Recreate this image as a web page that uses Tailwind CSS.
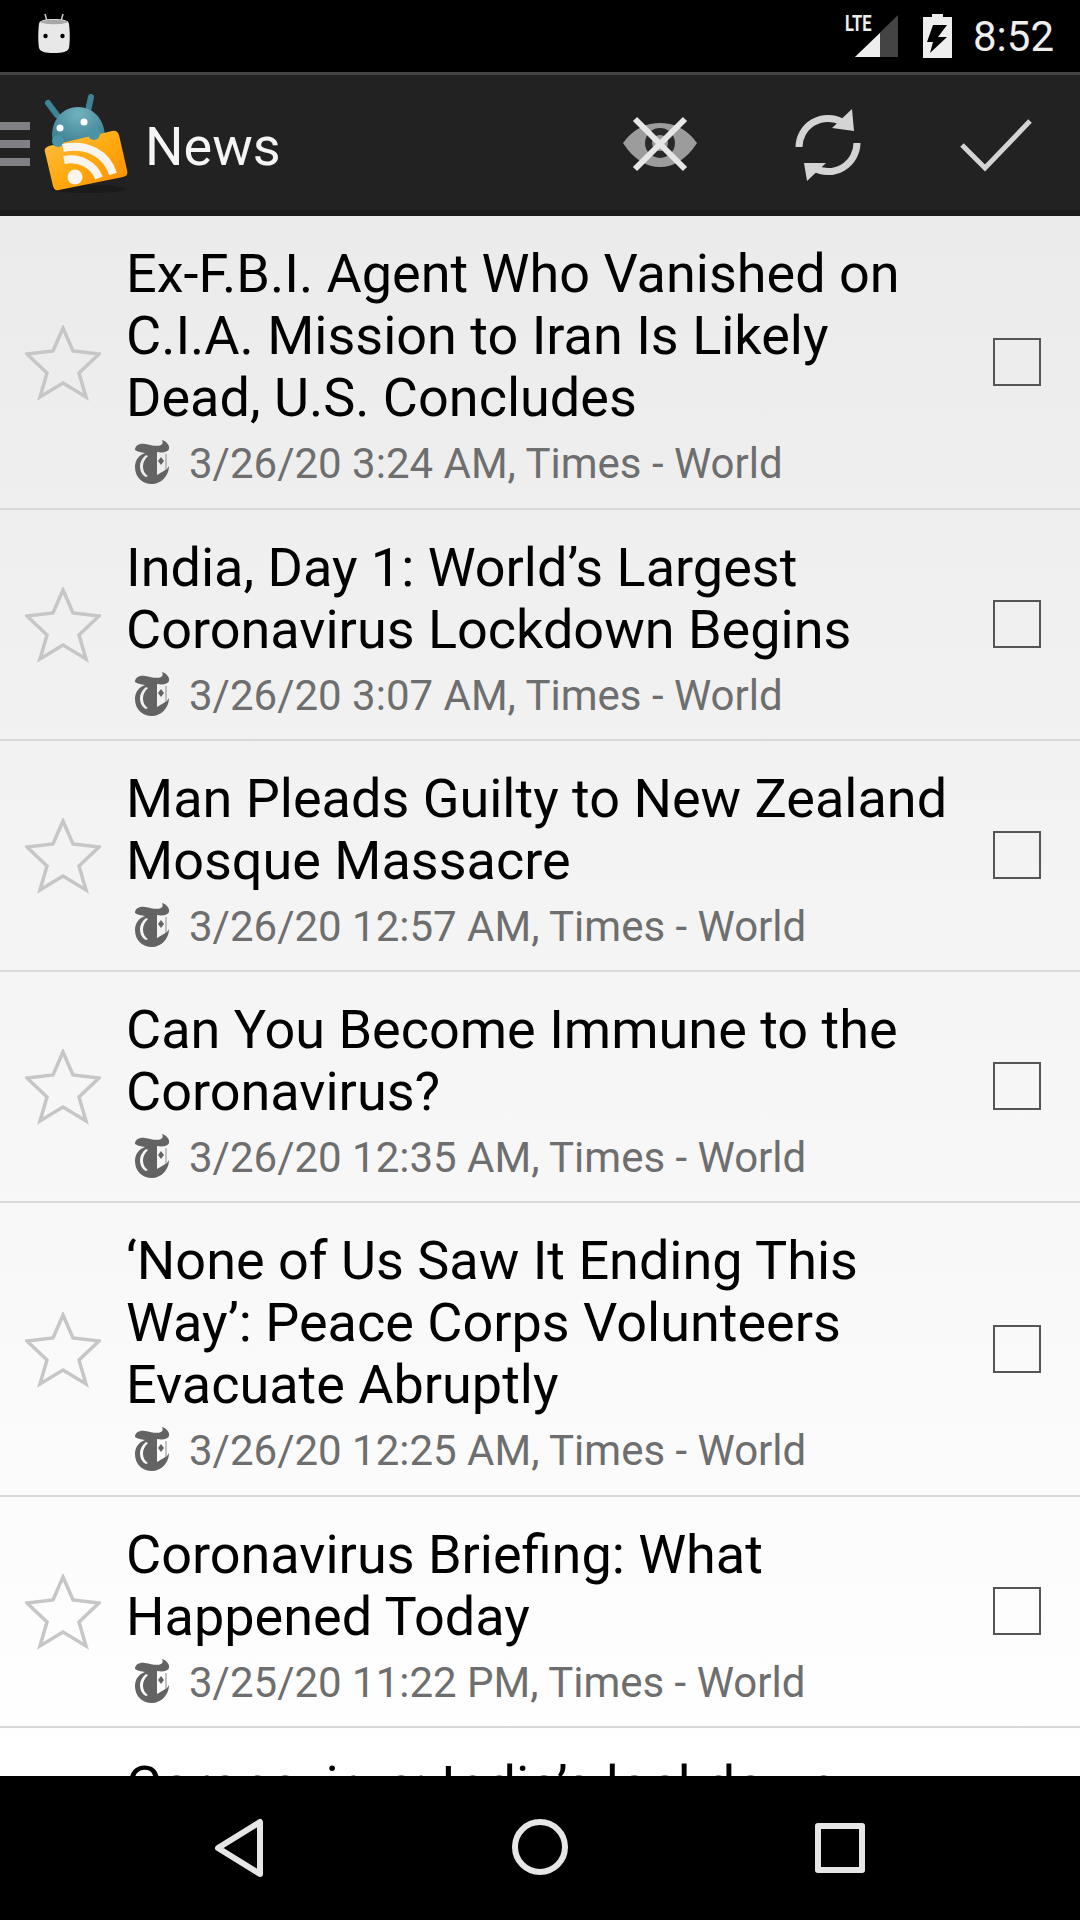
<!DOCTYPE html>
<html lang="en">
<head>
    <meta charset="UTF-8">
    <meta name="viewport" content="width=device-width, initial-scale=1.0">
    <title>News</title>
    <script src="https://cdn.jsdelivr.net/npm/@tailwindcss/browser@4"></script>
</head>
<body class="bg-black font-['Roboto',sans-serif]">
    <svg class="hidden">
        <defs>
            <symbol id="star" viewBox="0 0 76 76">
                <path d="M38 3 L48 26 L74 29 L54 48 L61 72 L38 58 L15 72 L22 48 L2 29 L28 26 Z" fill="none" stroke="#c6c6c6" stroke-width="3.5"/>
            </symbol>
            <symbol id="times" viewBox="0 0 36 44">
                <path fill-rule="evenodd" fill="#636363" d="M1 10 C1 5 6 3 11 4 C17 5 23 7 27 5 C29 4 29 2 28 0 C32 1 36 5 35 9 C34 12 29 13 23 12 L23 35 L33 29 L35 26 C35 36 27 44 18 44 C8 44 1 37 1 27 C1 20 5 15 11 13 C7 12 4 12 1 10 Z M12 15 C8 18 6 22 6 26 C6 31 8 35 12 37 L14 36 C11 34 9 31 9 26 C9 22 11 19 14 16 Z"/>
                <path d="M27 17 L30 21 L27 25 L24 21 Z" fill="#636363"/>
                <path d="M32 14 L32 30" stroke="#8a8a8a" stroke-width="1"/>
            </symbol>
        </defs>
    </svg>

    <div class="h-[1920px] flex flex-col overflow-hidden">
        <!-- Status bar -->
        <div class="h-[72px] bg-black relative shrink-0">
            <svg class="absolute left-[36px] top-[12px]" width="36" height="42" viewBox="0 0 36 42">
                <path d="M9 2 L11 9 M27 2 L25 9" stroke="#ccc" stroke-width="1.5"/>
                <path d="M3 12 C3 8 10 7 18 7 C26 7 33 8 33 12 C34 20 34 30 33 36 C32 40 26 41 18 41 C10 41 4 40 3 36 C2 30 2 20 3 12 Z" fill="#e8e8e8"/>
                <path d="M4 10 C8 7 28 7 32 10 C28 13 8 13 4 10 Z" fill="#a8a8a8"/>
                <circle cx="9.5" cy="24" r="2.2" fill="#000"/>
                <circle cx="26.5" cy="24" r="2.2" fill="#000"/>
            </svg>
            <div class="absolute left-[845px] top-[9px] text-[#eee] text-[22px] font-bold scale-x-75 origin-left leading-[30px]">LTE</div>
            <svg class="absolute left-[855px] top-[15px]" width="44" height="43" viewBox="0 0 44 43">
                <path d="M0 42 L43 0 L43 42 Z" fill="#444"/>
                <path d="M0 42 L25 18 L25 42 Z" fill="#eee"/>
            </svg>
            <svg class="absolute left-[923px] top-[14px]" width="29" height="44" viewBox="0 0 29 44">
                <path d="M9 0 H20 V3 H29 V44 H0 V3 H9 Z" fill="#eee"/>
                <path d="M10 11 L24 11 L15 23 L24 23 L7 39 L10 28 L4 28 Z" fill="#000"/>
            </svg>
            <div class="absolute left-[973px] top-[12px] text-[#eee] text-[42px] leading-[50px]">8:52</div>
        </div>

        <!-- Action bar -->
        <div class="h-[144px] shrink-0 bg-[#222222] border-t-[3px] border-t-[#444444] border-b-[6px] border-b-[#1a1a1a] relative flex items-center">
            <div class="w-[30px] flex flex-col gap-[10px] shrink-0 mt-[3px]">
                <div class="h-[8px] bg-[#808085]"></div>
                <div class="h-[8px] bg-[#808085]"></div>
                <div class="h-[8px] bg-[#808085]"></div>
            </div>
            <svg class="absolute left-[42px] top-[19px]" width="90" height="102" viewBox="0 0 90 102">
                <defs>
                    <radialGradient id="robot" cx="0.5" cy="0.15" r="0.9">
                        <stop offset="0" stop-color="#72b2bf"/>
                        <stop offset="1" stop-color="#2c6f84"/>
                    </radialGradient>
                    <linearGradient id="rss" x1="0" y1="0" x2="1" y2="1">
                        <stop offset="0" stop-color="#fdc04a"/>
                        <stop offset="0.5" stop-color="#ffa90f"/>
                        <stop offset="1" stop-color="#ff8c00"/>
                    </linearGradient>
                </defs>
                <ellipse cx="46" cy="95" rx="38" ry="4" fill="#1a1a1a"/>
                <path d="M6 9 L15 21 M49 3 L46 17" stroke="#3f8496" stroke-width="6" stroke-linecap="round"/>
                <path d="M10 42 C10 24 22 13 36 13 C50 13 63 24 63 44 L40 60 L14 60 Z" fill="url(#robot)"/>
                <circle cx="18" cy="34" r="3.5" fill="#fff"/>
                <circle cx="42" cy="28" r="3.5" fill="#fff"/>
                <path d="M7 52 L70 37 C74 36 76 38 77 41 L85 76 C86 80 85 82 81 83 L17 96 C13 97 12 95 11 92 L3 58 C2 55 4 53 7 52 Z" fill="url(#rss)"/>
                <circle cx="16" cy="47" r="6" fill="#4a94a6"/>
                <circle cx="52" cy="40" r="6" fill="#4a94a6"/>
                <circle cx="33" cy="83" r="7.5" fill="#f8f5ee"/>
                <path d="M22 66 C38 63 52 71 57 84" fill="none" stroke="#f8f5ee" stroke-width="8"/>
                <path d="M21 54 C45 49 65 60 71 80" fill="none" stroke="#f8f5ee" stroke-width="8"/>
            </svg>
            <div class="ml-[115px] text-[#f5f5f5] text-[54px] leading-[60px] mt-[8px]">News</div>

            <!-- eye -->
            <svg class="absolute left-[620px] top-[35px]" width="80" height="70" viewBox="0 0 80 70">
                <path d="M3 33 C14 18 27 13 40 13 C53 13 66 18 77 33 C66 50 53 57 40 57 C27 57 14 50 3 33 Z" fill="#9c9c9c"/>
                <circle cx="40" cy="33" r="15" fill="#2a2a2a"/>
                <circle cx="40" cy="33" r="8" fill="#9c9c9c"/>
                <path d="M15 9 L65 59 M65 9 L15 59" stroke="#e6e6e6" stroke-width="6"/>
            </svg>
            <!-- sync -->
            <svg class="absolute left-[792px] top-[32px]" width="76" height="76" viewBox="0 0 76 76">
                <path d="M7 40 A 29 29 0 0 1 50 15" fill="none" stroke="#d4d4d4" stroke-width="7"/>
                <path d="M65 36 A 29 29 0 0 1 22 61" fill="none" stroke="#d4d4d4" stroke-width="7"/>
                <path d="M60 2 L62 24 L40 21 Z" fill="#d4d4d4"/>
                <path d="M15 74 L12 56 L34 56 Z" fill="#d4d4d4"/>
            </svg>
            <!-- check -->
            <svg class="absolute left-[959px] top-[42px]" width="74" height="58" viewBox="0 0 74 58">
                <path d="M3 28 L26 51 L71 4" fill="none" stroke="#d4d4d4" stroke-width="5"/>
            </svg>
        </div>

        <!-- Article list -->
        <div id="list" class="h-[1560px] shrink-0 overflow-hidden bg-gradient-to-b from-[#ebebeb] to-[#ffffff]"></div>

        <!-- Nav bar -->
        <div class="h-[144px] shrink-0 bg-black flex relative z-10">
            <svg class="absolute left-[212px] top-[42px]" width="54" height="60" viewBox="0 0 54 60">
                <path d="M48 4 L48 56 L6 30 Z" fill="none" stroke="#e6e6e6" stroke-width="6" stroke-linejoin="round"/>
            </svg>
            <svg class="absolute left-[510px] top-[41px]" width="60" height="60" viewBox="0 0 60 60">
                <circle cx="30" cy="30" r="25" fill="none" stroke="#e6e6e6" stroke-width="6"/>
            </svg>
            <div class="absolute left-[815px] top-[47px] w-[50px] h-[50px] border-[6px] border-[#e6e6e6] rounded-[3px]"></div>
        </div>
    </div>

    <script>
        const articles = [
            { title: ['Ex-F.B.I. Agent Who Vanished on', 'C.I.A. Mission to Iran Is Likely', 'Dead, U.S. Concludes'], time: '3/26/20 3:24 AM' },
            { title: ['India, Day 1: World’s Largest', 'Coronavirus Lockdown Begins'], time: '3/26/20 3:07 AM' },
            { title: ['Man Pleads Guilty to New Zealand', 'Mosque Massacre'], time: '3/26/20 12:57 AM' },
            { title: ['Can You Become Immune to the', 'Coronavirus?'], time: '3/26/20 12:35 AM' },
            { title: ['‘None of Us Saw It Ending This', 'Way’: Peace Corps Volunteers', 'Evacuate Abruptly'], time: '3/26/20 12:25 AM' },
            { title: ['Coronavirus Briefing: What', 'Happened Today'], time: '3/25/20 11:22 PM' },
            { title: ['Coronavirus: India’s lockdown', 'Begins'], time: '3/25/20 10:40 PM' }
        ];

        document.getElementById('list').innerHTML = articles.map(article => `
            <div class="flex items-center border-b-[2px] border-b-[#d9d9d9]">
                <svg class="w-[76px] h-[76px] ml-[25px] mt-[1px] shrink-0"><use href="#star"/></svg>
                <div class="ml-[25px] flex-1 pt-[27px] ${article.title.length === 3 ? 'pb-[19px]' : 'pb-[18px]'}">
                    <div class="text-black text-[54px] leading-[62px]">${article.title.map(line => `<div class="whitespace-nowrap">${line}</div>`).join('')}</div>
                    <div class="flex items-center h-[50px] mt-[10px]">
                        <svg class="w-[36px] h-[44px] ml-[8px] -mt-[5px] shrink-0"><use href="#times"/></svg>
                        <span class="ml-[19px] text-[#6e6e6e] text-[42px] leading-[50px] whitespace-nowrap">${article.time}, Times - World</span>
                    </div>
                </div>
                <div class="w-[48px] h-[48px] mr-[39px] -mt-[1px] border-[2px] border-[#555555] shrink-0"></div>
            </div>
        `).join('');
    </script>
</body>
</html>
